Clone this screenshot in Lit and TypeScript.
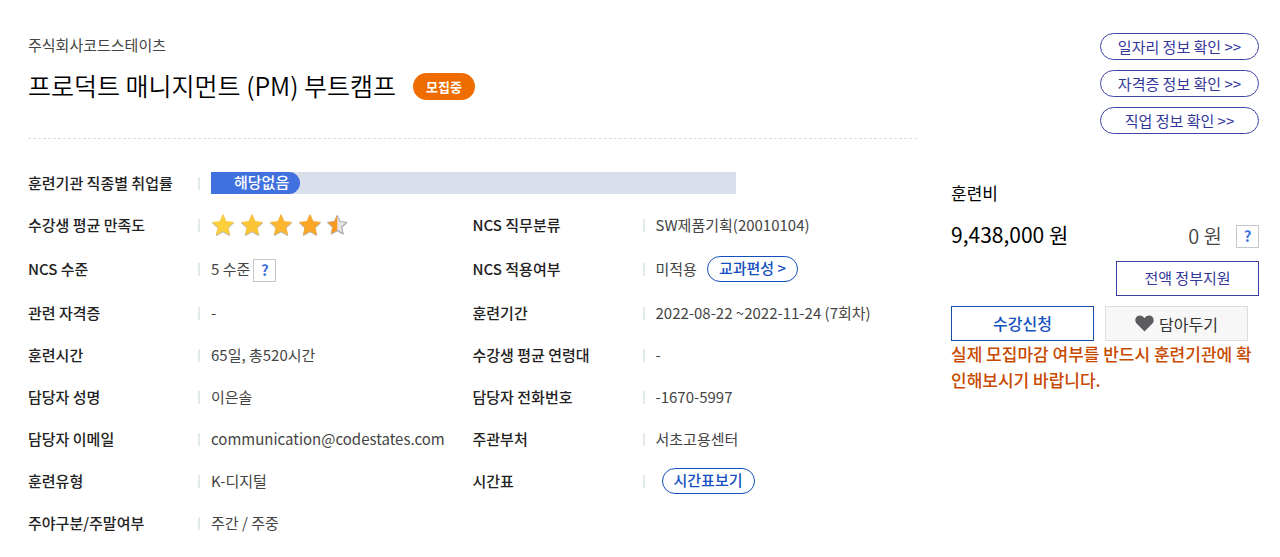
import { LitElement, html, css, svg, nothing, type TemplateResult } from "lit";
import { customElement, property } from "lit/decorators.js";

interface Detail {
  label: string;
  value: string | TemplateResult;
  wide?: boolean;
}

const STAR = "M12 1.5l3.1 6.9 7.4.8-5.5 5.1 1.6 7.5L12 18l-6.6 3.8L7 14.3 1.5 9.2l7.4-.8z";

@customElement("star-rating")
class StarRating extends LitElement {
  @property({ type: Number }) score = 0;

  static styles = css`
    :host {
      display: block;
    }
    .stars {
      display: flex;
      gap: 5px;
    }
    .star {
      width: 24px;
      height: 24px;
      display: block;
    }
  `;

  render() {
    const fills = ["#fdcf3a", "#fdc436", "#fdb72e", "#fca625", "#fb9820"];
    return html`<div class="stars" role="img" aria-label=${this.score}>
      ${fills.map((fill, i) => {
        const half = this.score - i < 1;
        return html`<svg class="star" viewBox="0 0 24 24">
          <g transform=${half ? "translate(-.6 1) scale(.9)" : "translate(0 0)"}>
            <path d=${STAR} transform="translate(0 .8)" fill="#a9a9ad" stroke="#b4b4b8" stroke-width="1" stroke-linejoin="round" />
            <path d=${STAR} fill=${half ? "#e4e4e6" : fill} stroke=${half ? "#aeaeb2" : fill} stroke-width=${half ? 1.2 : 0.6} stroke-linejoin="round" />
            ${half ? svg`<path d="M12 1.5L8.9 8.4l-7.4.8L7 14.3l-1.6 7.5L12 18z" fill=${fill} />` : nothing}
          </g>
        </svg>`;
      })}
    </div>`;
  }
}

@customElement("app-root")
class AppRoot extends LitElement {
  static styles = css`
    :host {
      display: block;
      background: #fff;
      color: #444;
      font-family: "Noto Sans CJK KR", "Noto Sans", sans-serif;
      font-size: 15px;
      line-height: 22px;
    }
    h1,
    p,
    dl,
    dd {
      margin: 0;
    }
    button {
      font: inherit;
      box-sizing: border-box;
      margin: 0;
      padding: 0;
      background: #fff;
      cursor: pointer;
    }
    .page {
      display: grid;
      grid-template-columns: minmax(0, 1fr) 308px;
      column-gap: 34px;
      padding: 33px 21px 22px 28px;
    }
    .heading {
      border-bottom: 1px dashed #ddd;
      padding: 1px 0 35px;
    }
    .title-row {
      display: flex;
      align-items: center;
      gap: 17px;
      margin-top: 11px;
    }
    .title {
      font-size: 25px;
      line-height: 36px;
      font-weight: 350;
      color: #000;
    }
    .badge {
      background: #ee6c00;
      color: #fff;
      font-size: 13px;
      font-weight: 700;
      line-height: 27px;
      margin-top: 2px;
      padding: 0 13px;
      border-radius: 14px;
    }
    .links {
      display: flex;
      flex-direction: column;
      align-items: flex-end;
      gap: 10px;
    }
    .link {
      box-sizing: border-box;
      width: 159px;
      border: 1px solid #4245a8;
      border-radius: 14px;
      color: #33379b;
      line-height: 25px;
      text-align: center;
      text-decoration: none;
    }
    .details {
      display: grid;
      grid-template-columns: 1fr 1fr;
      row-gap: 20px;
      padding-top: 33px;
    }
    .item {
      display: flex;
      align-items: center;
      min-height: 22px;
    }
    .wide {
      grid-column: 1 / -1;
    }
    .label {
      width: 170px;
      font-weight: 500;
      color: #222;
      white-space: nowrap;
    }
    .value {
      flex: 1;
      display: flex;
      align-items: center;
      white-space: nowrap;
    }
    .value::before {
      content: "";
      width: 2px;
      height: 13px;
      margin-right: 11px;
      background: #e3eaea;
    }
    .rate {
      width: 73%;
      background: #d8deea;
    }
    .rate-fill {
      box-sizing: border-box;
      width: 89px;
      padding: 0 0 2px 23px;
      border-radius: 0 11px 11px 0;
      background: #4071df;
      color: #fff;
      font-weight: 500;
      line-height: 20px;
    }
    star-rating {
      margin: -2px 0;
    }
    .help {
      width: 23px;
      height: 23px;
      border: 1px solid #c4c6cc;
      color: #4071df;
      font-weight: 700;
      line-height: 20px;
    }
    .level {
      margin: 2px 0 0 3px;
    }
    .pill {
      height: 26px;
      border: 1px solid #1450b8;
      border-radius: 13px;
      padding: 0 11px 2px;
      color: #1450c0;
      font-weight: 500;
      line-height: 22px;
    }
    .course {
      margin-left: 10px;
    }
    .schedule {
      margin: -2px 0 -2px 6px;
    }
    .fee {
      padding-top: 43px;
    }
    .fee-label {
      font-size: 17px;
      color: #000;
    }
    .fee-row {
      display: flex;
      align-items: flex-start;
      margin-top: 16px;
    }
    .price {
      flex: 1;
      font-size: 21px;
      line-height: 28px;
      color: #000;
    }
    .own {
      display: flex;
      align-items: center;
      gap: 14px;
      font-size: 20px;
      line-height: 32px;
      font-weight: 350;
    }
    .own .help {
      font-size: 15px;
    }
    .box {
      width: 143px;
      height: 35px;
      border: 1px solid #3a3f9f;
      padding-bottom: 2px;
      color: #33379b;
    }
    .support {
      display: block;
      margin: 9px 0 0 auto;
    }
    .actions {
      display: flex;
      gap: 11px;
      margin: 10px 0 0;
    }
    .apply {
      border-color: #1450a8;
      color: #1450c0;
      font-size: 16px;
      font-weight: 500;
    }
    .keep {
      display: flex;
      align-items: center;
      justify-content: center;
      gap: 5px;
      padding: 0;
      border-color: #ddd;
      background: #f7f7f7;
      color: #333;
      font-size: 16px;
    }
    .heart {
      width: 19px;
      height: 17px;
    }
    .notice {
      font-size: 17px;
      line-height: 26px;
      color: #c84a00;
      font-weight: 500;
    }
  `;

  private details: Detail[] = [
    {
      label: "훈련기관 직종별 취업률",
      value: html`<div class="rate"><div class="rate-fill">해당없음</div></div>`,
      wide: true,
    },
    { label: "수강생 평균 만족도", value: html`<star-rating score="4.5"></star-rating>` },
    { label: "NCS 직무분류", value: "SW제품기획(20010104)" },
    { label: "NCS 수준", value: html`5 수준<button class="help level">?</button>` },
    { label: "NCS 적용여부", value: html`미적용<button class="pill course">교과편성 &gt;</button>` },
    { label: "관련 자격증", value: "-" },
    { label: "훈련기간", value: "2022-08-22 ~2022-11-24 (7회차)" },
    { label: "훈련시간", value: "65일, 총520시간" },
    { label: "수강생 평균 연령대", value: "-" },
    { label: "담당자 성명", value: "이은솔" },
    { label: "담당자 전화번호", value: "-1670-5997" },
    { label: "담당자 이메일", value: "communication@codestates.com" },
    { label: "주관부처", value: "서초고용센터" },
    { label: "훈련유형", value: "K-디지털" },
    { label: "시간표", value: html`<button class="pill schedule">시간표보기</button>` },
    { label: "주야구분/주말여부", value: "주간 / 주중" },
  ];

  render() {
    return html`
      <main class="page">
        <header class="heading">
          <p>주식회사코드스테이츠</p>
          <div class="title-row">
            <h1 class="title">프로덕트 매니지먼트 (PM) 부트캠프</h1>
            <span class="badge">모집중</span>
          </div>
        </header>
        <nav class="links">
          ${["일자리 정보 확인", "자격증 정보 확인", "직업 정보 확인"].map(
            (text) => html`<a class="link" href="#">${text} &gt;&gt;</a>`
          )}
        </nav>
        <dl class="details">
          ${this.details.map(
            (d) => html`<div class="item ${d.wide ? "wide" : ""}">
              <dt class="label">${d.label}</dt>
              <dd class="value">${d.value}</dd>
            </div>`
          )}
        </dl>
        <aside class="fee">
          <p class="fee-label">훈련비</p>
          <div class="fee-row">
            <span class="price">9,438,000 원</span>
            <div class="own">
              <span>0 원</span>
              <button class="help">?</button>
            </div>
          </div>
          <button class="box support">전액 정부지원</button>
          <div class="actions">
            <button class="box apply">수강신청</button>
            <button class="box keep">
              <svg class="heart" viewBox="0 0 19 17" aria-hidden="true">
                <path
                  d="M9.5 16.5L1.6 8.6C-.3 6.6.1 3.3 1.7 1.7 3.9-.4 7.6.1 9.5 3.2 11.4.1 15.1-.4 17.3 1.7c1.6 1.6 2 4.9.1 6.9z"
                  fill="#5c5c60"
                />
              </svg>
              담아두기
            </button>
          </div>
          <p class="notice">실제 모집마감 여부를 반드시 훈련기관에 확인해보시기 바랍니다.</p>
        </aside>
      </main>
    `;
  }
}
